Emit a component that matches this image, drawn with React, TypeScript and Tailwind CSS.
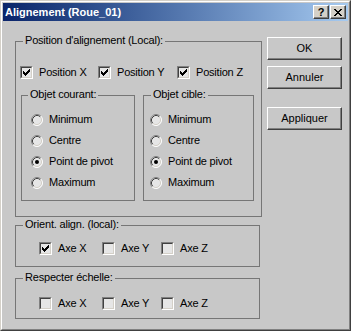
import React from "react";

const Check = () => (
  <svg width="7" height="7" viewBox="0 0 7 7" shapeRendering="crispEdges">
    <path
      d="M6 0h1v1h-1z M5 1h2v1h-2z M0 2h1v1h-1z M4 2h3v1h-3z M0 3h2v1h-2z M3 3h3v1h-3z M0 4h5v1h-5z M1 5h3v1h-3z M2 6h1v1h-1z"
      fill="#000"
    />
  </svg>
);

const CheckBox = ({ checked, label }: { checked?: boolean; label: string }) => (
  <span className="flex items-center gap-[6px]">
    <span className="flex w-[13px] h-[13px] shrink-0 border border-t-[#808080] border-l-[#808080] border-r-white border-b-white">
      <span className="flex flex-1 items-center justify-center border border-t-[#404040] border-l-[#404040] border-r-[#d4d0c8] border-b-[#d4d0c8] bg-[#e6e6e6]">
        {checked && <Check />}
      </span>
    </span>
    <span className="whitespace-nowrap tracking-[-0.2px]">{label}</span>
  </span>
);

const Radio = ({ checked, label }: { checked?: boolean; label: string }) => (
  <div className="flex h-[21px] items-center gap-[6px]">
    <svg width="12" height="12" viewBox="0 0 12 12" className="shrink-0">
      <circle cx="6" cy="6" r="5.5" fill="#e6e6e6" />
      <path d="M2.11 9.89 A5.5 5.5 0 0 1 9.89 2.11" stroke="#808080" fill="none" strokeWidth="1" />
      <path d="M9.89 2.11 A5.5 5.5 0 0 1 2.11 9.89" stroke="#ffffff" fill="none" strokeWidth="1" />
      <path d="M2.82 9.18 A4.5 4.5 0 0 1 9.18 2.82" stroke="#404040" fill="none" strokeWidth="1" />
      <path d="M9.18 2.82 A4.5 4.5 0 0 1 2.82 9.18" stroke="#d4d0c8" fill="none" strokeWidth="1" />
      {checked && <circle cx="6" cy="6" r="2" fill="#000" />}
    </svg>
    <span className="whitespace-nowrap tracking-[-0.2px]">{label}</span>
  </div>
);

const Legend = ({ children, left }: { children: React.ReactNode; left: string }) => (
  <span className={`absolute -top-[8px] ${left} bg-[#c8c8c8] px-[2px] whitespace-nowrap tracking-[-0.2px]`}>
    {children}
  </span>
);

const Button = ({ label, cls }: { label: string; cls?: string }) => (
  <button
    className={`flex h-[23px] w-[75px] items-center justify-center border border-t-white border-l-white border-r-[#404040] border-b-[#404040] bg-[#c8c8c8] shadow-[inset_-1px_-1px_#808080] ${cls ?? ""}`}
  >
    {label}
  </button>
);

const TitleBtn = ({ children }: { children: React.ReactNode }) => (
  <span className="flex h-[14px] w-[16px] items-center justify-center border border-t-white border-l-white border-r-[#404040] border-b-[#404040] bg-[#d4d0c8] shadow-[inset_-1px_-1px_#808080]">
    {children}
  </span>
);

export default function App() {
  return (
    <div className="h-[331px] w-[351px] border border-t-[#d4d0c8] border-l-[#d4d0c8] border-r-[#404040] border-b-[#404040] bg-[#c8c8c8] font-['Liberation_Sans',Arial,sans-serif] text-[11px] leading-[13px] text-black">
      <div className="flex h-full flex-col border border-t-white border-l-white border-r-[#808080] border-b-[#808080] p-px">
        {/* Title bar */}
        <div className="flex h-[18px] items-center bg-linear-to-r from-[#0a246a] to-[#a6caf0] pl-[2px] pr-[2px]">
          <span className="text-[11px] font-bold text-white">Alignement (Roue_01)</span>
          <div className="ml-auto flex gap-[1px]">
            <TitleBtn>
              <span className="text-[11px] font-bold leading-[10px]">?</span>
            </TitleBtn>
            <TitleBtn>
              <svg width="8" height="7" viewBox="0 0 8 7" shapeRendering="crispEdges">
                <path
                  d="M0 0h2v1h-2z M6 0h2v1h-2z M1 1h2v1h-2z M5 1h2v1h-2z M2 2h4v1h-4z M3 3h2v1h-2z M2 4h4v1h-4z M1 5h2v1h-2z M5 5h2v1h-2z M0 6h2v1h-2z M6 6h2v1h-2z"
                  fill="#000"
                />
              </svg>
            </TitleBtn>
          </div>
        </div>

        {/* Body */}
        <div className="flex pl-[12px]">
          <div className="mt-[20px] flex w-[247px] flex-col">
            {/* Position d'alignement */}
            <div className="relative h-[176px] border border-[#767676] pl-[4px] pt-[24px]">
              <Legend left="left-[7px]">Position d'alignement (Local):</Legend>
              <div className="flex h-[13px] items-center">
                <div className="w-[78px]">
                  <CheckBox checked label="Position X" />
                </div>
                <div className="w-[79px]">
                  <CheckBox checked label="Position Y" />
                </div>
                <CheckBox checked label="Position Z" />
              </div>
              <div className="ml-[1px] mt-[16px] flex gap-[8px]">
                <div className="relative h-[106px] w-[114px] border border-[#767676] pl-[9px] pt-[13px]">
                  <Legend left="left-[6px]">Objet courant:</Legend>
                  <Radio label="Minimum" />
                  <Radio label="Centre" />
                  <Radio checked label="Point de pivot" />
                  <Radio label="Maximum" />
                </div>
                <div className="relative h-[106px] w-[111px] border border-[#767676] pl-[6px] pt-[13px]">
                  <Legend left="left-[7px]">Objet cible:</Legend>
                  <Radio label="Minimum" />
                  <Radio label="Centre" />
                  <Radio checked label="Point de pivot" />
                  <Radio label="Maximum" />
                </div>
              </div>
            </div>

            {/* Orient */}
            <div className="relative mt-[8px] h-[42px] w-[245px] border border-[#767676] pl-[23px] pt-[16px]">
              <Legend left="left-[7px]">Orient. align. (local):</Legend>
              <div className="flex h-[13px] items-center">
                <div className="w-[63px]">
                  <CheckBox checked label="Axe X" />
                </div>
                <div className="w-[59px]">
                  <CheckBox label="Axe Y" />
                </div>
                <CheckBox label="Axe Z" />
              </div>
            </div>

            {/* Respecter */}
            <div className="relative mt-[11px] h-[41px] w-[245px] border border-[#767676] pl-[23px] pt-[18px]">
              <Legend left="left-[7px]">Respecter échelle:</Legend>
              <div className="flex h-[13px] items-center">
                <div className="w-[63px]">
                  <CheckBox label="Axe X" />
                </div>
                <div className="w-[59px]">
                  <CheckBox label="Axe Y" />
                </div>
                <CheckBox label="Axe Z" />
              </div>
            </div>
          </div>

          {/* Buttons */}
          <div className="ml-[5px] mt-[16px] flex flex-col">
            <Button label="OK" />
            <Button label="Annuler" cls="mt-[6px]" />
            <Button label="Appliquer" cls="mt-[18px]" />
          </div>
        </div>
      </div>
    </div>
  );
}
